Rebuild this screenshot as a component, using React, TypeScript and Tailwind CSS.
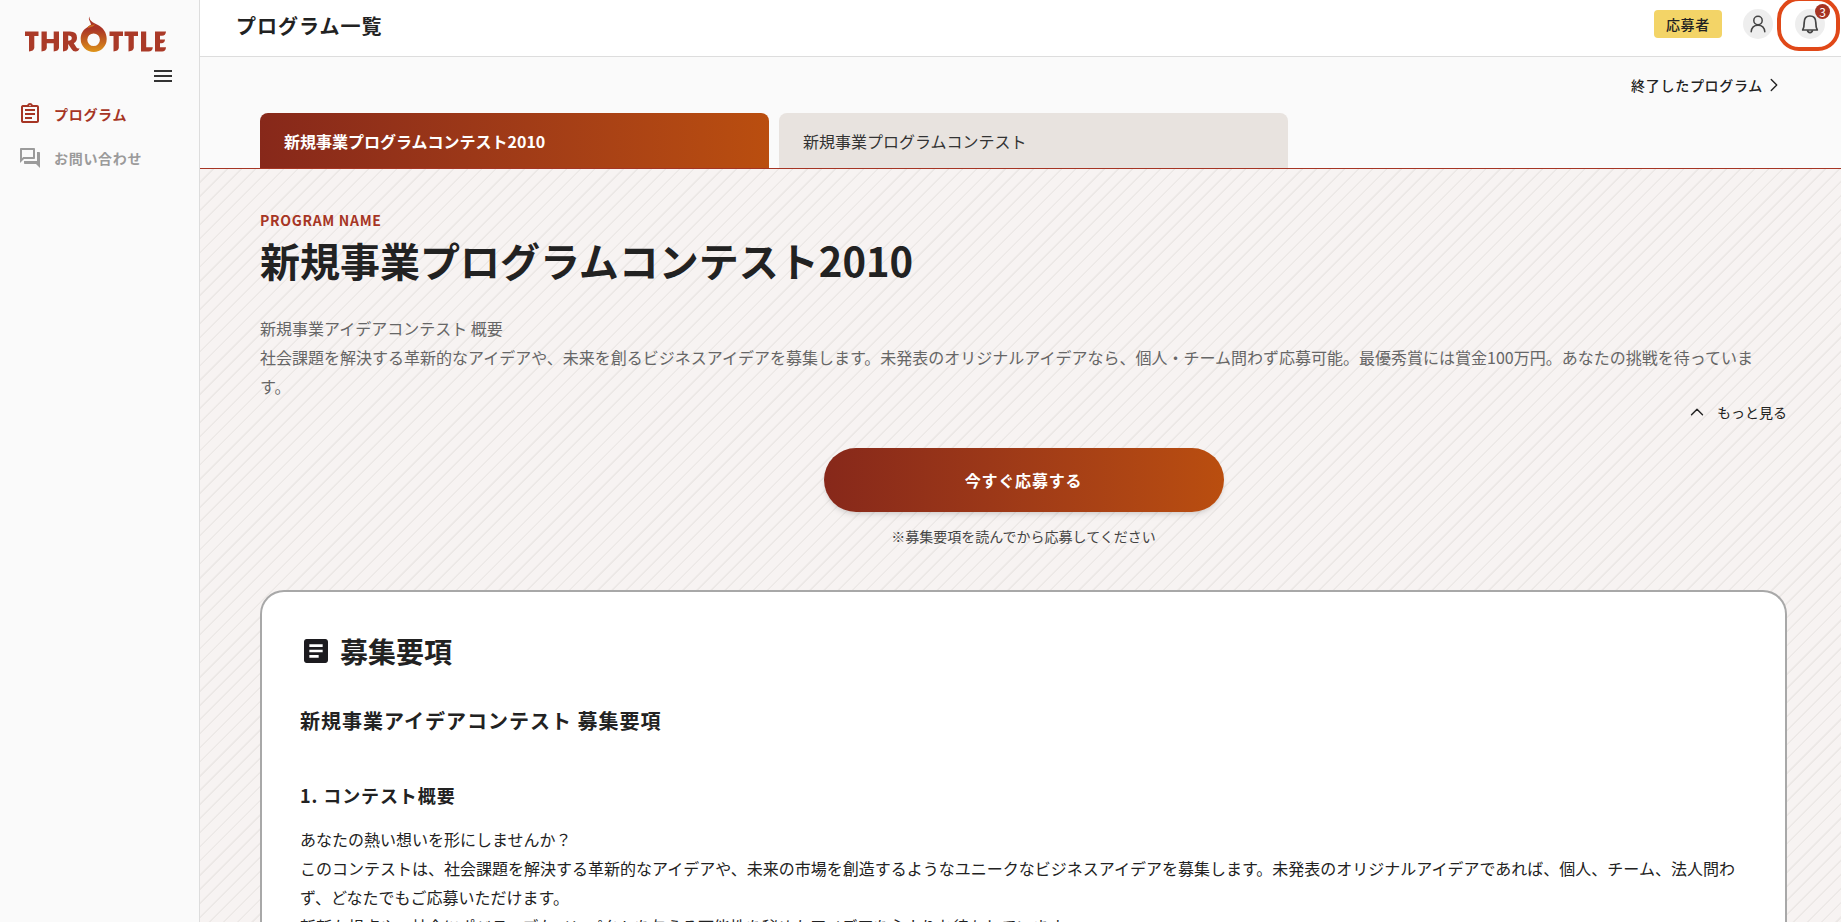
import type { ReactNode } from "react";
import { MdOutlineAssignment, MdOutlineForum, MdArticle, MdMenu } from "react-icons/md";
import { ChevronRight, ChevronUp } from "lucide-react";

function Logo() {
  return (
    <svg viewBox="0 0 144 38" className="h-[38px] w-[144px]" role="img" aria-label="THROTTLE">
      <defs>
        <linearGradient id="flame" x1="0" y1="0" x2="0" y2="1">
          <stop offset="0.35" stopColor="#aa3526" />
          <stop offset="0.7" stopColor="#c4641f" />
          <stop offset="1" stopColor="#df951a" />
        </linearGradient>
      </defs>
      <g fill="#aa3a28">
        <path d="M1 15.500H14.500V20H10.300V32Q9.800 35 5 35.500V20H1Z" />
        <path d="M17.500 15.500H22.800V23H29.700V15.500H35V32Q34.500 35 29.700 35.500V27.300H22.800V32Q22.300 35 17.500 35.500Z" />
        <path
          fillRule="evenodd"
          d="M39 15.500H46Q53 15.500 53 21.700Q53 25.500 49.800 27.200L52.500 31.500Q53.500 32.800 55.500 32.300Q54.500 35.500 51.500 35.500Q49 35.500 47.500 33L44.200 28V32Q43.700 35 39 35.500ZM44.200 19.500V24.700Q47.800 24.700 47.800 22Q47.800 19.500 44.200 19.500Z"
        />
        <path d="M85.500 15.500H99V20H94.800V32Q94.300 35 89.500 35.500V20H85.500Z" />
        <path d="M100.500 15.500H114V20H109.800V32Q109.300 35 104.500 35.500V20H100.500Z" />
        <path d="M117 15.500H122.200V31.200H128.800Q128.500 35.500 124.500 35.500H117Z" />
        <path d="M131 15.500H142Q141.700 19.700 138 19.700H136V23.500H141Q140.700 27.300 137.500 27.300H136V31.200H142Q141.700 35.500 138 35.500H131Z" />
      </g>
      <path
        d="M65.500 0.500C65 4.500 69 6.500 73 8.500C79.500 11.500 82.700 17 82.700 23A13 13 0 0 1 56.700 23C56.700 17.500 59 14 63 11.500C65 10 66 9.500 67 8.500C65.500 3 64 4 65.500 0.500ZM69.600 17.500A6.300 6.300 0 1 0 69.600 30.100A6.300 6.300 0 0 0 69.600 17.500Z"
        fill="url(#flame)"
        fillRule="evenodd"
      />
      <path d="M64 10.500C66 8.500 69 9 71 8.200C70 10.500 66.500 11 64 12Z" fill="#cc6a22" />
    </svg>
  );
}

function PersonIcon() {
  return (
    <svg viewBox="0 0 20 20" className="size-5" fill="none" stroke="currentColor" strokeWidth="1.500" strokeLinecap="round" aria-hidden="true">
      <circle cx="10" cy="6.500" r="4.200" />
      <path d="M3.200 17.800C3.600 13.600 6.300 11.300 10 11.300S16.400 13.600 16.800 17.800" />
    </svg>
  );
}

function BellIcon() {
  return (
    <svg viewBox="0 0 20 20" className="size-5" fill="none" stroke="currentColor" strokeWidth="1.700" strokeLinejoin="round" aria-hidden="true">
      <path d="M2.700 16C4 13.800 4.200 12 4.200 8.500C4.200 4.500 6.500 2 10 2S15.800 4.500 15.800 8.500C15.800 12 16 13.800 17.300 16Z" />
      <path d="M7.500 16.200C7.700 17.800 8.600 18.600 10 18.600S12.300 17.800 12.500 16.200" />
    </svg>
  );
}

function NavItem({ icon, label, color }: { icon: ReactNode; label: string; color: string }) {
  return (
    <a href="#" className={`flex h-11 items-center gap-3 px-[18px] text-sm font-bold tracking-wider ${color}`}>
      {icon}
      {label}
    </a>
  );
}

export default function App() {
  return (
    <div
      lang="ja"
      className="flex h-screen overflow-hidden bg-[#fafafa] font-['Noto_Sans_CJK_JP',sans-serif] text-[#222]"
    >
      <aside className="flex w-[200px] shrink-0 flex-col border-r border-[#ddd]">
        <div className="pt-4 pl-6">
          <Logo />
        </div>
        <button type="button" aria-label="メニュー" className="mt-2.5 mr-6 self-end text-[#333]">
          <MdMenu size={24} />
        </button>
        <nav className="mt-1">
          <NavItem icon={<MdOutlineAssignment size={24} />} label="プログラム" color="text-[#a63524]" />
          <NavItem icon={<MdOutlineForum size={24} />} label="お問い合わせ" color="text-[#9b9b9b]" />
        </nav>
      </aside>

      <div className="flex min-w-0 flex-1 flex-col">
        <header className="flex h-[57px] shrink-0 items-center justify-between border-b border-[#ddd] bg-white pl-9">
          <h1 className="pb-1 text-xl font-bold tracking-wider">プログラム一覧</h1>
          <div className="flex items-center pr-px pb-2">
            <span className="mr-[21px] rounded bg-[#f3d467] px-3 py-1 text-sm leading-5 font-medium tracking-wider">応募者</span>
            <button type="button" aria-label="アカウント" className="grid size-[30px] place-items-center rounded-full bg-[#eee] text-[#444]">
              <PersonIcon />
            </button>
            <div className="ml-1 rounded-[22px] border-4 border-[#e04818] py-2 pr-[11px] pl-3.5">
              <button type="button" aria-label="通知" className="relative grid size-[30px] place-items-center rounded-full bg-[#eee] text-[#444]">
                <BellIcon />
                <span className="absolute -top-[5px] -right-[5px] size-[15px] rounded-full bg-[#a63524] text-center text-xs leading-[15px] text-white">3</span>
              </button>
            </div>
          </div>
        </header>

        <main className="min-h-0 flex-1 overflow-hidden">
          <div className="border-b border-[#a63524] pr-[54px] pl-[60px]">
            <div className="flex h-14 items-center justify-end pr-0.5">
              <a href="#" className="flex items-center text-sm font-medium tracking-wider">
                終了したプログラム
                <ChevronRight size={22} strokeWidth={1.5} />
              </a>
            </div>
            <div role="tablist" className="flex gap-2.5">
              <button type="button" role="tab" aria-selected="true" className="h-[55px] w-1/3 rounded-t-lg bg-linear-to-r from-[#87281a] to-[#ba4e0f] px-6 text-left font-bold text-white">
                新規事業プログラムコンテスト2010
              </button>
              <button type="button" role="tab" aria-selected="false" className="h-[55px] w-1/3 rounded-t-lg bg-[#e8e3df] px-6 text-left text-[#333]">
                新規事業プログラムコンテスト
              </button>
            </div>
          </div>

          <div className="bg-[#f7f3f2] bg-[repeating-linear-gradient(135deg,transparent_0px_8px,#ece8e6_9px_10px)] pt-10 pr-[54px] pl-[60px]">
            <p className="text-sm leading-[22px] font-bold tracking-wider text-[#a63524]">PROGRAM NAME</p>
            <h2 className="text-[40px] leading-[58px] font-bold">新規事業プログラムコンテスト2010</h2>
            <p className="mt-[25px] pr-4 text-base leading-[29px] text-[#666]">
              新規事業アイデアコンテスト 概要
              <br />
              社会課題を解決する革新的なアイデアや、未来を創るビジネスアイデアを募集します。未発表のオリジナルアイデアなら、個人・チーム問わず応募可能。最優秀賞には賞金100万円。あなたの挑戦を待っています。
            </p>
            <div className="flex justify-end">
              <button type="button" className="flex items-center gap-[9px] text-sm leading-5">
                <ChevronUp size={22} strokeWidth={1.5} />
                もっと見る
              </button>
            </div>
            <div className="mt-[25px] flex flex-col items-center">
              <button type="button" className="h-16 w-[400px] rounded-full bg-linear-to-r from-[#87281a] to-[#ba4e0f] font-bold tracking-wider text-white shadow-md">
                今すぐ応募する
              </button>
              <p className="mt-3 text-sm leading-6 text-[#444]">※募集要項を読んでから応募してください</p>
            </div>

            <section className="mt-[42px] rounded-t-3xl border-2 border-b-0 border-[#a8a8a8] bg-white px-[38px] pt-[39px] pb-10">
              <h3 className="flex items-center gap-2 text-[28px] leading-10 font-bold">
                <MdArticle size={32} color="#1c1b1f" />
                募集要項
              </h3>
              <h4 className="mt-[34px] text-xl leading-8 font-bold tracking-wider">新規事業アイデアコンテスト 募集要項</h4>
              <h5 className="mt-11 text-lg leading-7 font-bold tracking-wider">1. コンテスト概要</h5>
              <p className="mt-4 leading-[29px]">
                あなたの熱い想いを形にしませんか？
                <br />
                このコンテストは、社会課題を解決する革新的なアイデアや、未来の市場を創造するようなユニークなビジネスアイデアを募集します。未発表のオリジナルアイデアであれば、個人、チーム、法人問わず、どなたでもご応募いただけます。
                <br />
                斬新な視点や、社会にポジティブなインパクトを与える可能性を秘めたアイデアを心よりお待ちしています。
              </p>
            </section>
          </div>
        </main>
      </div>
    </div>
  );
}
